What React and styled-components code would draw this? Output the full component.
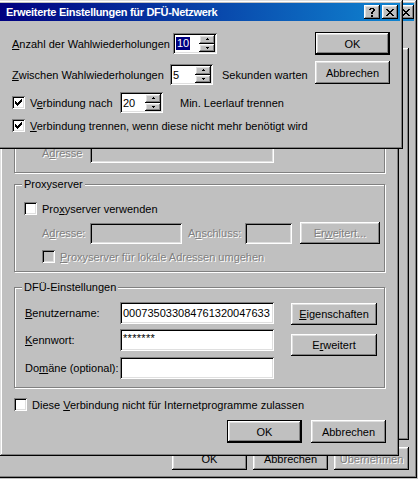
import React from 'react'
import styled, { createGlobalStyle, css } from 'styled-components'

const face = '#c0c0c0'

const GlobalStyle = createGlobalStyle`
  html, body { margin: 0; padding: 0; background: #c0c0c0; }
  body {
    font-family: "Liberation Sans", Arial, sans-serif;
    font-size: 11px;
    color: #000;
  }
  * { box-sizing: border-box; }
`

const raised = css`
  box-shadow: inset -1px -1px 0 #000, inset 1px 1px 0 #fff,
    inset -2px -2px 0 #808080, inset 2px 2px 0 #dfdfdf;
`
const sunken = css`
  box-shadow: inset 1px 1px 0 #808080, inset -1px -1px 0 #fff,
    inset 2px 2px 0 #000, inset -2px -2px 0 #dfdfdf;
`
const disabledText = css`
  color: #808080;
  text-shadow: 1px 1px 0 #fff;
`

const Desktop = styled.div`
  position: relative;
  width: 418px;
  height: 479px;
  overflow: hidden;
  background: ${face};
`

// windows sit on the desktop at their own coordinates
const Window = styled.div`
  position: absolute;
  left: ${p => p.$x}px;
  top: ${p => p.$y}px;
  width: ${p => p.$w}px;
  height: ${p => p.$h}px;
  z-index: ${p => p.$z};
  padding: 3px;
  background: ${face};
  box-shadow: inset -1px -1px 0 #000, inset 1px 1px 0 #dfdfdf,
    inset -2px -2px 0 #808080, inset 2px 2px 0 #fff;
  display: flex;
  flex-direction: column;
`

const TitleBar = styled.div`
  flex: none;
  height: 18px;
  display: flex;
  align-items: center;
  padding: 0 ${p => p.$padRight ?? 2}px 0 6px;
  background: linear-gradient(to right, #000080, #1084d0);
  color: #fff;
  font-weight: bold;
  font-size: 11px;
`

const TitleText = styled.span`
  flex: 1;
  white-space: nowrap;
  overflow: hidden;
  letter-spacing: -0.3px;
`

const CaptionButton = styled.div`
  flex: none;
  width: 16px;
  height: 14px;
  margin-left: ${p => p.$gap || 0}px;
  background: ${face};
  ${raised};
  display: flex;
  align-items: center;
  justify-content: center;
`

const Button = styled.button`
  appearance: none;
  flex: none;
  width: ${p => p.$w || 75}px;
  height: ${p => p.$h || 23}px;
  margin: 0;
  margin-left: ${p => p.$ml || 0}px;
  padding: 0;
  font: inherit;
  color: #000;
  background: ${face};
  border: ${p => (p.$default ? '1px solid #000' : 'none')};
  ${raised};
  ${p => p.disabled && disabledText};
`

const ButtonRow = styled.div`
  display: flex;
  justify-content: flex-end;
  gap: ${p => p.$gap}px;
  margin-top: ${p => p.$mt}px;
`

const ButtonColumn = styled.div`
  flex: none;
  display: flex;
  flex-direction: column;
  gap: ${p => p.$gap}px;
  margin-top: ${p => p.$mt || 0}px;
  margin-left: ${p => p.$ml || 0}px;
`

const Label = styled.span`
  flex: none;
  width: ${p => (p.$w ? `${p.$w}px` : 'auto')};
  margin-left: ${p => p.$ml || 0}px;
  white-space: nowrap;
  ${p => p.$disabled && disabledText};
`

const Field = styled.div`
  flex: none;
  width: ${p => p.$w}px;
  height: ${p => p.$h || 21}px;
  padding: 0 3px;
  display: flex;
  align-items: center;
  white-space: nowrap;
  overflow: hidden;
  background: ${p => (p.$disabled ? face : '#fff')};
  ${sunken};
`

const Secret = styled.span`
  align-self: flex-start;
  margin-top: 3px;
  letter-spacing: 0.3px;
`

const SpinFrame = styled.div`
  flex: none;
  width: ${p => p.$w}px;
  height: 21px;
  padding: 2px;
  display: flex;
  background: #fff;
  ${sunken};
`

const SpinValue = styled.div`
  flex: 1;
  display: flex;
  align-items: center;
  padding-left: 1px;
`

const Selected = styled.span`
  background: #000080;
  color: #fff;
  padding: 0 1px;
  line-height: 13px;
`

const SpinButtons = styled.div`
  width: 16px;
  display: flex;
  flex-direction: column;
`

const SpinHalf = styled.div`
  flex: 1;
  background: ${face};
  ${raised};
  display: flex;
  align-items: center;
  justify-content: center;
`

const Box = styled.span`
  flex: none;
  width: 13px;
  height: 13px;
  display: inline-flex;
  align-items: center;
  justify-content: center;
  background: ${p => (p.$disabled ? face : '#fff')};
  ${sunken};
`

const CheckRow = styled.div`
  display: flex;
  align-items: center;
  gap: 5px;
  height: 13px;
  margin-top: ${p => p.$mt || 0}px;
  padding-left: ${p => p.$pl || 0}px;
  white-space: nowrap;
`

const FieldRow = styled.div`
  display: flex;
  align-items: center;
  height: ${p => p.$h || 21}px;
  margin-top: ${p => p.$mt || 0}px;
  padding-left: ${p => p.$pl || 0}px;
`

const DialogBody = styled.div`
  flex: 1;
  display: flex;
  padding: 0 10px 0 12px;
`

const Fields = styled.div`
  flex: 1;
  display: flex;
  flex-direction: column;
`

const SettingsBody = styled.div`
  flex: 1;
  display: flex;
  flex-direction: column;
  padding: 0 10px 0 11px;
`

const Group = styled.div`
  position: relative;
  flex: none;
  width: 371px;
  height: ${p => p.$h}px;
  margin-top: ${p => p.$mt}px;
  border: 1px solid #808080;
  box-shadow: inset 1px 1px 0 #fff, 1px 1px 0 #fff;
  display: flex;
  flex-direction: ${p => (p.$row ? 'row' : 'column')};
  justify-content: ${p => (p.$bottom ? 'flex-end' : 'flex-start')};
  padding: ${p => p.$pad};
`

const Legend = styled.span`
  position: absolute;
  top: -7px;
  left: 7px;
  padding: 0 2px;
  line-height: 13px;
  background: ${face};
  white-space: nowrap;
`

const LoginFields = styled.div`
  display: flex;
  flex-direction: column;
`

const SheetBody = styled.div`
  flex: 1;
  display: flex;
  flex-direction: column;
  padding: 0 5px 0 10px;
`

const TabPanel = styled.div`
  height: 392px;
  margin-top: 27px;
  background: ${face};
  ${raised};
`

const pixel = { shapeRendering: 'crispEdges' }

const CheckMark = ({ color = '#000' }) => (
  <svg width="7" height="7" viewBox="0 0 7 7" style={pixel}>
    <path
      fill={color}
      d="M0 2h1v3H0zM1 3h1v3H1zM2 4h1v3H2zM3 3h1v3H3zM4 2h1v3H4zM5 1h1v3H5zM6 0h1v3H6z"
    />
  </svg>
)

const CloseGlyph = () => (
  <svg width="8" height="7" viewBox="0 0 8 7" style={pixel}>
    <path
      fill="#000"
      d="M0 0h2v1H0zM6 0h2v1H6zM1 1h2v1H1zM5 1h2v1H5zM2 2h4v1H2zM3 3h2v1H3zM2 4h4v1H2zM1 5h2v1H1zM5 5h2v1H5zM0 6h2v1H0zM6 6h2v1H6z"
    />
  </svg>
)

const HelpGlyph = () => (
  <svg width="6" height="9" viewBox="0 0 6 9" style={pixel}>
    <path
      fill="#000"
      d="M1 0h4v1H1zM0 1h2v1H0zM4 1h2v1H4zM4 2h2v1H4zM3 3h2v1H3zM2 4h2v2H2zM2 7h2v2H2z"
    />
  </svg>
)

const Arrow = ({ down }) => (
  <svg width="3" height="2" viewBox="0 0 3 2" style={pixel}>
    <path fill="#000" d={down ? 'M0 0h3v1H0zM1 1h1v1H1z' : 'M1 0h1v1H1zM0 1h3v1H0z'} />
  </svg>
)

function Spin({ w, value, selected }) {
  return (
    <SpinFrame $w={w}>
      <SpinValue>{selected ? <Selected>{value}</Selected> : value}</SpinValue>
      <SpinButtons>
        <SpinHalf><Arrow /></SpinHalf>
        <SpinHalf><Arrow down /></SpinHalf>
      </SpinButtons>
    </SpinFrame>
  )
}

function Check({ checked, disabled, children, mt, pl }) {
  return (
    <CheckRow $mt={mt} $pl={pl}>
      <Box $disabled={disabled}>{checked && <CheckMark />}</Box>
      <Label $disabled={disabled}>{children}</Label>
    </CheckRow>
  )
}

export default function App() {
  return (
    <>
      <GlobalStyle />
      <Desktop>
        {/* property sheet at the back, only its right edge and buttons show */}
        <Window $x={-10} $y={0} $w={427} $h={478} $z={1}>
          <TitleBar $padRight={0}>
            <TitleText />
            <CaptionButton><CloseGlyph /></CaptionButton>
          </TitleBar>
          <SheetBody>
            <TabPanel />
            <ButtonRow $gap={6} $mt={7}>
              <Button>OK</Button>
              <Button>Abbrechen</Button>
              <Button disabled>Übernehmen</Button>
            </ButtonRow>
          </SheetBody>
        </Window>

        <Window $x={0} $y={0} $w={399} $h={456} $z={2}>
          <TitleBar>
            <TitleText />
            <CaptionButton><HelpGlyph /></CaptionButton>
            <CaptionButton $gap={2}><CloseGlyph /></CaptionButton>
          </TitleBar>
          <SettingsBody>
            <Group $mt={8} $h={144} $bottom $pad="0 0 9px 0">
              <FieldRow $pl={27}>
                <Label $w={48} $disabled>A<u>d</u>resse</Label>
                <Field $w={184} $disabled />
              </FieldRow>
            </Group>

            <Group $mt={11} $h={88} $pad="17px 0 0 9px">
              <Legend>Proxyserver</Legend>
              <Check>Pro<u>x</u>yserver verwenden</Check>
              <FieldRow $mt={7} $h={22} $pl={18}>
                <Label $w={48} $disabled>A<u>d</u>resse:</Label>
                <Field $w={92} $disabled />
                <Label $w={57} $ml={6} $disabled>A<u>n</u>schluss:</Label>
                <Field $w={47} $disabled />
                <Button $w={80} $h={22} $ml={8} disabled>
                  Er<u>w</u>eitert...
                </Button>
              </FieldRow>
              <Check disabled mt={6} pl={18}>
                <u>P</u>roxyserver für lokale Adressen umgehen
              </Check>
            </Group>

            <Group $mt={15} $h={101} $row $pad="14px 0 0 10px">
              <Legend>DFÜ-Einstellungen</Legend>
              <LoginFields>
                <FieldRow $h={22}>
                  <Label $w={95}><u>B</u>enutzername:</Label>
                  <Field $w={154} $h={22}>000735033084761320047633</Field>
                </FieldRow>
                <FieldRow $h={22} $mt={5}>
                  <Label $w={95}><u>K</u>ennwort:</Label>
                  <Field $w={154} $h={22}><Secret>*******</Secret></Field>
                </FieldRow>
                <FieldRow $h={22} $mt={6}>
                  <Label $w={95}>Do<u>m</u>äne (optional):</Label>
                  <Field $w={154} $h={22} />
                </FieldRow>
              </LoginFields>
              <ButtonColumn $gap={9} $mt={1} $ml={17}>
                <Button $w={86} $h={22}><u>E</u>igenschaften</Button>
                <Button $w={86} $h={22}>E<u>r</u>weitert</Button>
              </ButtonColumn>
            </Group>

            <Check mt={10}>Diese <u>V</u>erbindung nicht für Internetprogramme zulassen</Check>

            <ButtonRow $gap={9} $mt={9}>
              <Button $default>OK</Button>
              <Button>Abbrechen</Button>
            </ButtonRow>
          </SettingsBody>
        </Window>

        <Window $x={-3} $y={0} $w={406} $h={149} $z={3}>
          <TitleBar>
            <TitleText>Erweiterte Einstellungen für DFÜ-Netzwerk</TitleText>
            <CaptionButton><HelpGlyph /></CaptionButton>
            <CaptionButton $gap={2}><CloseGlyph /></CaptionButton>
          </TitleBar>
          <DialogBody>
            <Fields>
              <FieldRow $mt={12}>
                <Label $w={161}><u>A</u>nzahl der Wahlwiederholungen</Label>
                <Spin w={44} value="10" selected />
              </FieldRow>
              <FieldRow $mt={10}>
                <Label $w={158}><u>Z</u>wischen Wahlwiederholungen</Label>
                <Spin w={43} value="5" />
                <Label $ml={9}>Sekunden warten</Label>
              </FieldRow>
              <FieldRow $mt={7}>
                <CheckRow>
                  <Box><CheckMark /></Box>
                  <Label $w={90}>V<u>e</u>rbindung nach</Label>
                </CheckRow>
                <Spin w={43} value="20" />
                <Label $ml={17}>Min. Leerlauf trennen</Label>
              </FieldRow>
              <Check checked mt={6}>
                <u>V</u>erbindung trennen, wenn diese nicht mehr benötigt wird
              </Check>
            </Fields>
            <ButtonColumn $gap={6} $mt={11}>
              <Button $default>OK</Button>
              <Button>Abbrechen</Button>
            </ButtonColumn>
          </DialogBody>
        </Window>
      </Desktop>
    </>
  )
}
